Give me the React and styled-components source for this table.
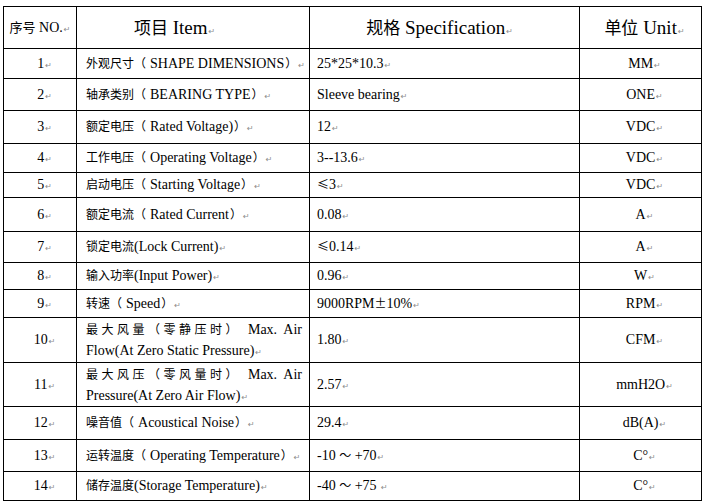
import React from 'react';
import styled, { createGlobalStyle } from 'styled-components';

const GlobalStyle = createGlobalStyle`
  html, body { margin: 0; padding: 0; background: #fff; }
  body { font-family: "Liberation Serif", "Noto Sans CJK SC", serif; color: #000; }
`;

const Page = styled.div`
  width: 704px;
  height: 503px;
  box-sizing: border-box;
  padding: 6px 0 0 3px;
  overflow: hidden;
`;

const Table = styled.table`
  border-collapse: collapse;
  table-layout: fixed;
  width: 698px;
`;

const Row = styled.tr`
  height: ${(p) => p.$h}px;
`;

const Cell = styled.td`
  border: 1px solid #000;
  padding: 0 ${(p) => p.$pr || 0}px 0 ${(p) => p.$pl || 0}px;
  text-align: ${(p) => p.$align || 'left'};
  vertical-align: middle;
  font-size: ${(p) => p.$size || 14}px;
  line-height: 18px;
  white-space: nowrap;
  overflow: hidden;
`;

const Zh = styled.span`
  font-family: "Noto Sans CJK SC", sans-serif;
  font-size: ${(p) => p.$size}px;
  line-height: 1;
  padding-left: ${(p) => p.$padL || 0}px;
  padding-right: ${(p) => p.$padR || 0}px;
`;

// word paragraph mark
const Mark = styled.span`
  font-family: "DejaVu Sans", sans-serif;
  font-size: 8px;
  line-height: 1;
  color: #8c8c8c;
  margin-left: 1px;
`;

const Line = styled.div`
  white-space: normal;
  line-height: 21px;
  text-align: ${(p) => (p.$justify ? 'justify' : 'left')};
  text-align-last: ${(p) => (p.$justify ? 'justify' : 'auto')};
`;

const CJK = /([\u2190-\u2bff\u3000-\u9fff\uff00-\uffef±]+)/;

const Txt = ({ text, zh = 12, mark = true }) => (
  <>
    {text.split(CJK).filter(Boolean).map((part, i) =>
      CJK.test(part) ? (
        <Zh
          key={i}
          $size={zh}
          $padR={part.endsWith('（') ? 4 : 0}
          $padL={part.startsWith('）') ? 1 : 0}
        >
          {part}
        </Zh>
      ) : (
        <React.Fragment key={i}>{part}</React.Fragment>
      )
    )}
    {mark && <Mark>↵</Mark>}
  </>
);

const rows = [
  [1, '外观尺寸（SHAPE DIMENSIONS）', '25*25*10.3', 'MM', 30],
  [2, '轴承类别（BEARING TYPE）', 'Sleeve bearing', 'ONE', 32],
  [3, '额定电压（Rated Voltage)）', '12', 'VDC', 33],
  [4, '工作电压（Operating Voltage）', '3--13.6', 'VDC', 29],
  [5, '启动电压（Starting Voltage）', '≤3', 'VDC', 25],
  [6, '额定电流（Rated Current）', '0.08', 'A', 34],
  [7, '锁定电流(Lock Current)', '≤0.14', 'A', 31],
  [8, '输入功率(Input Power)', '0.96', 'W', 27],
  [9, '转速（Speed）', '9000RPM±10%', 'RPM', 28],
  [10, ['最大风量（零静压时） Max. Air', 'Flow(At Zero Static Pressure)'], '1.80', 'CFM', 45],
  [11, ['最大风压（零风量时） Max. Air', 'Pressure(At Zero Air Flow)'], '2.57', 'mmH2O', 44],
  [12, '噪音值（Acoustical Noise）', '29.4', 'dB(A)', 33],
  [13, '运转温度（Operating Temperature）', '-10 ～ +70', 'C°', 32],
  [14, '储存温度(Storage Temperature)', '-40 ～ +75 ', 'C°', 29],
];

const App = () => (
  <>
    <GlobalStyle />
    <Page>
      <Table>
        <colgroup>
          <col style={{ width: 73 }} />
          <col style={{ width: 233 }} />
          <col style={{ width: 270 }} />
          <col style={{ width: 122 }} />
        </colgroup>
        <tbody>
          <Row $h={42}>
            <Cell $align="center">
              <Txt text="序号 NO." zh={13} />
            </Cell>
            <Cell $pl={57} $size={19}>
              <Txt text="项目 Item" zh={17} />
            </Cell>
            <Cell $align="center" $pr={10} $size={19}>
              <Txt text="规格 Specification" zh={17} />
            </Cell>
            <Cell $align="center" $pl={8} $size={19}>
              <Txt text="单位 Unit" zh={17} />
            </Cell>
          </Row>
          {rows.map(([no, item, spec, unit, h]) => (
            <Row key={no} $h={h}>
              <Cell $align="center" $pl={9}>
                {no}
                <Mark>↵</Mark>
              </Cell>
              <Cell $pl={9} $pr={7}>
                {Array.isArray(item) ? (
                  <>
                    <Line $justify>
                      <Txt text={item[0]} mark={false} />
                    </Line>
                    <Line>
                      <Txt text={item[1]} />
                    </Line>
                  </>
                ) : (
                  <Txt text={item} />
                )}
              </Cell>
              <Cell $pl={7}>
                <Txt text={spec} />
              </Cell>
              <Cell $align="center" $pl={8}>
                {unit}
                <Mark>↵</Mark>
              </Cell>
            </Row>
          ))}
        </tbody>
      </Table>
    </Page>
  </>
);

export default App;
